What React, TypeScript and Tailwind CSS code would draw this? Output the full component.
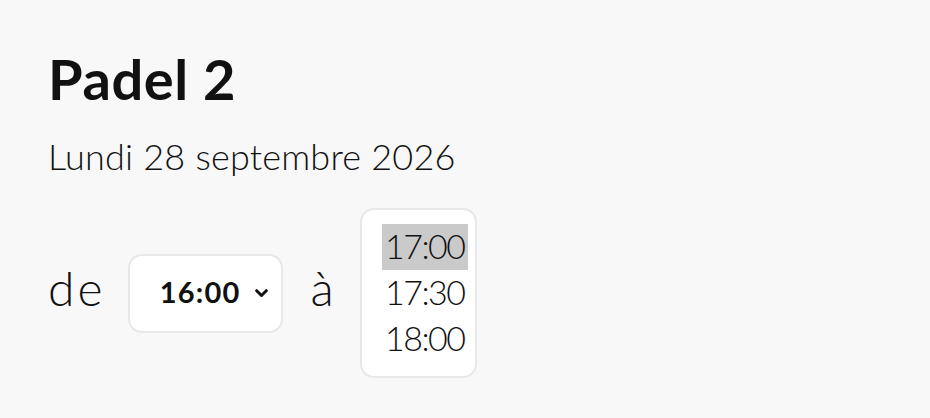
import React from "react";

export default function App() {
  return (
    <div className="min-h-[418px] w-[930px] bg-[#f8f8f8] text-[#111111] pl-[48px] pt-[46px]" style={{ fontFamily: "Lato, 'Noto Sans', sans-serif" }}>
      <h1 className="text-[56px] font-bold leading-[66px] tracking-[0.6px]">Padel 2</h1>
      <p className="mt-[24px] text-[36px] font-light leading-[40px] tracking-[0.2px]">Lundi 28 septembre 2026</p>
      <div className="mt-[32px] flex items-center">
        <span className="mb-[10px] text-[48px] font-light leading-none tracking-[3px]">de</span>
        <div className="ml-[23px] flex h-[79px] w-[155px] items-center justify-end rounded-[14px] border-2 border-[#e8e8e8] bg-white pr-[13px]">
          <span className="mb-[4px] text-[29px] font-bold leading-none tracking-[1.2px]">16:00</span>
          <svg width="13" height="9" viewBox="0 0 13 9" className="ml-[15px]">
            <path d="M1.7 1.7 L6.5 6.5 L11.3 1.7" fill="none" stroke="#111" strokeWidth="3" strokeLinecap="round" strokeLinejoin="round" />
          </svg>
        </div>
        <span className="mb-[10px] ml-[27px] text-[48px] font-light leading-none tracking-[2px]">à</span>
        <div className="ml-[24px] flex h-[170px] w-[117px] flex-col items-end rounded-[14px] border-2 border-[#e8e8e8] bg-white pr-[7px] pt-[14px]">
          <div className="flex h-[46px] w-[86px] items-center justify-center bg-[#cacaca] pb-[2px] text-[34px] font-light leading-none tracking-[-1.5px]">17:00</div>
          <div className="flex h-[46px] w-[86px] items-center justify-center pb-[2px] text-[34px] font-light leading-none tracking-[-1.5px]">17:30</div>
          <div className="flex h-[46px] w-[86px] items-center justify-center pb-[2px] text-[34px] font-light leading-none tracking-[-1.5px]">18:00</div>
        </div>
      </div>
    </div>
  );
}
